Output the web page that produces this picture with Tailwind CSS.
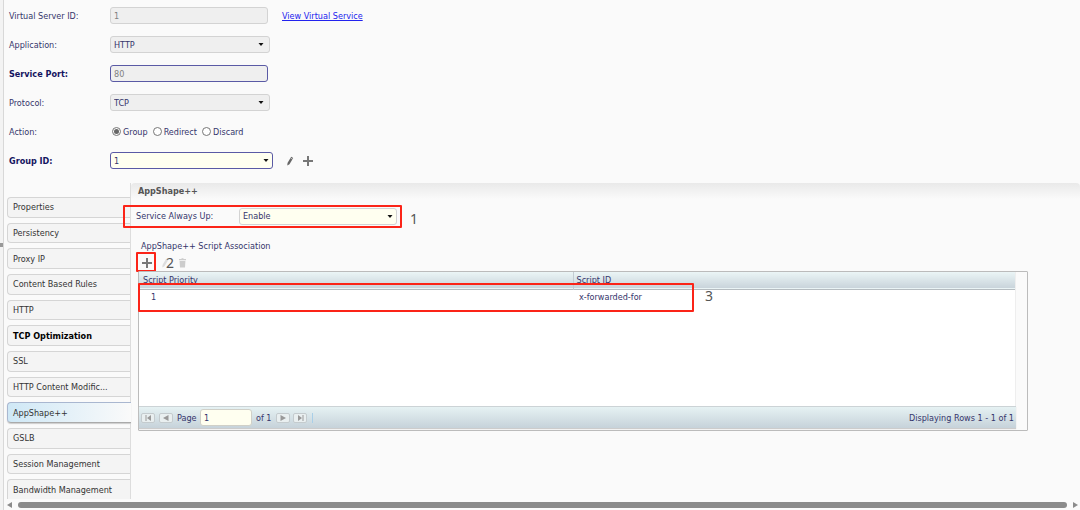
<!DOCTYPE html>
<html lang="en">
<head>
  <meta charset="UTF-8">
  <meta name="viewport" content="width=device-width, initial-scale=1.0">
  <title>Virtual Service</title>
  <script src="https://cdn.jsdelivr.net/npm/@tailwindcss/browser@4"></script>
</head>
<body class="h-screen flex overflow-hidden bg-[#fafafa] font-['DejaVu_Sans_Condensed','DejaVu_Sans',sans-serif] text-[9px] leading-3 text-[#35356b]">
  <!-- Splitter -->
  <div class="w-1 shrink-0 flex items-center bg-[#f3f3f3] border-r border-[#d8d8d8]">
    <span class="mb-5 w-[3px] h-1 bg-[#999]"></span>
  </div>

  <div class="flex-1 min-w-0 flex flex-col">
    <!-- Service form -->
    <form class="pt-px pl-[5px] shrink-0">
      <div class="h-[29px] flex items-center">
        <label for="vsid" class="w-[101px]">Virtual Server ID:</label>
        <input id="vsid" type="text" value="1" disabled class="w-[158px] h-[17px] px-[3px] rounded-[3px] border border-[#d3d3d3] bg-[#efefef] text-[#808080]">
        <a href="#" class="ml-[14px] text-[#2222ee] underline">View Virtual Service</a>
      </div>
      <div class="h-[29px] flex items-center">
        <label for="app" class="w-[101px]">Application:</label>
        <div class="relative w-40">
          <select id="app" class="block appearance-none w-full h-[17px] px-[3px] rounded-[3px] border border-[#d3d3d3] bg-[#efefef]"><option>HTTP</option></select>
          <svg class="absolute right-1.5 top-[7px] pointer-events-none" width="6" height="4" viewBox="0 0 6 4"><path d="M.5 0h5L3 3z" fill="#111"/></svg>
        </div>
      </div>
      <div class="h-[29px] flex items-center">
        <label for="port" class="w-[101px] font-bold text-[#14145f]">Service Port:</label>
        <input id="port" type="text" value="80" disabled class="w-[158px] h-[17px] px-[3px] rounded-[3px] border border-[#5a5aa5] bg-[#efefef] text-[#808080]">
      </div>
      <div class="h-[29px] flex items-center">
        <label for="proto" class="w-[101px]">Protocol:</label>
        <div class="relative w-40">
          <select id="proto" class="block appearance-none w-full h-[17px] px-[3px] rounded-[3px] border border-[#d3d3d3] bg-[#efefef]"><option>TCP</option></select>
          <svg class="absolute right-1.5 top-[7px] pointer-events-none" width="6" height="4" viewBox="0 0 6 4"><path d="M.5 0h5L3 3z" fill="#111"/></svg>
        </div>
      </div>
      <div class="h-[29px] flex items-center">
        <span class="w-[101px]">Action:</span>
        <div class="flex gap-[5px] pl-0.5">
          <label class="flex items-center gap-0.5"><input type="radio" name="action" checked class="appearance-none size-[9px] rounded-full border border-[#777] bg-[#666] bg-clip-content p-px">Group</label>
          <label class="flex items-center gap-0.5"><input type="radio" name="action" class="appearance-none size-[9px] rounded-full border border-[#777] bg-white">Redirect</label>
          <label class="flex items-center gap-0.5"><input type="radio" name="action" class="appearance-none size-[9px] rounded-full border border-[#777] bg-white">Discard</label>
        </div>
      </div>
      <div class="h-[29px] flex items-center">
        <label for="group" class="w-[101px] font-bold text-[#14145f]">Group ID:</label>
        <div class="relative w-[163px]">
          <select id="group" class="block appearance-none w-full h-[17px] px-[3px] rounded-[3px] border border-[#5a5aa5] bg-[#fffff0]"><option>1</option></select>
          <svg class="absolute right-1 top-[7px] pointer-events-none" width="6" height="4" viewBox="0 0 6 4"><path d="M.5 0h5L3 3z" fill="#111"/></svg>
        </div>
        <button type="button" aria-label="Edit group" class="ml-3"><svg width="10" height="10" viewBox="0 0 10 10"><path d="M6.2.8l2 1.2-3.7 6.3L2.3 9.6 2.5 7z" fill="#666"/><path d="M5.6 2l2 1.2" stroke="#fafafa" stroke-width=".6"/></svg></button>
        <button type="button" aria-label="Add group" class="ml-2"><svg width="10" height="10" viewBox="0 0 10 10"><path d="M5 0v10M0 5h10" stroke="#777" stroke-width="2"/></svg></button>
      </div>
    </form>

    <div class="flex-1 min-h-0 flex pt-2">
      <!-- Tabs -->
      <nav class="w-[127px] shrink-0 pt-[14px] pl-[3px] flex flex-col gap-[5px] text-[#333] border-r border-[#ddd]">
        <a href="#" class="flex-1 flex items-center pl-[5px] rounded-l-[4px] border border-r-0 border-[#d5d5d5] bg-[#f4f4f4]">Properties</a>
        <a href="#" class="flex-1 flex items-center pl-[5px] rounded-l-[4px] border border-r-0 border-[#d5d5d5] bg-[#f4f4f4]">Persistency</a>
        <a href="#" class="flex-1 flex items-center pl-[5px] rounded-l-[4px] border border-r-0 border-[#d5d5d5] bg-[#f4f4f4]">Proxy IP</a>
        <a href="#" class="flex-1 flex items-center pl-[5px] rounded-l-[4px] border border-r-0 border-[#d5d5d5] bg-[#f4f4f4]">Content Based Rules</a>
        <a href="#" class="flex-1 flex items-center pl-[5px] rounded-l-[4px] border border-r-0 border-[#d5d5d5] bg-[#f4f4f4]">HTTP</a>
        <a href="#" class="flex-1 flex items-center pl-[5px] rounded-l-[4px] border border-r-0 border-[#d5d5d5] bg-[#f4f4f4] font-bold text-black">TCP Optimization</a>
        <a href="#" class="flex-1 flex items-center pl-[5px] rounded-l-[4px] border border-r-0 border-[#d5d5d5] bg-[#f4f4f4]">SSL</a>
        <a href="#" class="flex-1 flex items-center pl-[5px] rounded-l-[4px] border border-r-0 border-[#d5d5d5] bg-[#f4f4f4]">HTTP Content Modific...</a>
        <a href="#" class="flex-1 flex items-center pl-[5px] -mr-px rounded-l-[4px] border border-r-0 border-[#a9b7d0] border-b-[#aaa] bg-linear-to-r from-[#cfe8f6] to-[#fafafa] shadow-[0_1px_1px_#ccc]">AppShape++</a>
        <a href="#" class="flex-1 flex items-center pl-[5px] rounded-l-[4px] border border-r-0 border-[#d5d5d5] bg-[#f4f4f4]">GSLB</a>
        <a href="#" class="flex-1 flex items-center pl-[5px] rounded-l-[4px] border border-r-0 border-[#d5d5d5] bg-[#f4f4f4]">Session Management</a>
        <a href="#" class="flex-1 flex items-center pl-[5px] rounded-tl-[4px] border border-r-0 border-b-0 border-[#d5d5d5] bg-[#f4f4f4]">Bandwidth Management</a>
      </nav>

      <!-- AppShape++ panel -->
      <section class="flex-1 min-w-0 pl-[7px]">
        <h2 class="-ml-[7px] pl-[7px] h-4 leading-4 font-bold text-[#555] rounded-t-[4px] bg-linear-to-b from-[#e9e9e9] to-[#fafafa]">AppShape++</h2>
        <div class="relative mt-[9px] -ml-0.5 h-4 flex items-center">
          <label for="always" class="w-[103px]">Service Always Up:</label>
          <div class="relative w-[158px]">
            <select id="always" class="block appearance-none w-full h-[17px] px-[3px] rounded-[3px] border border-[#d3d3d3] bg-[#fffff0]"><option>Enable</option></select>
            <svg class="absolute right-1 top-[7px] pointer-events-none" width="6" height="4" viewBox="0 0 6 4"><path d="M.5 0h5L3 3z" fill="#111"/></svg>
          </div>
          <span class="absolute -left-[13px] -top-[3px] w-[279px] h-[23px] border-2 border-[#fb2418] rounded-[1px] pointer-events-none"></span>
          <span class="absolute left-[274px] top-[3px] font-['Noto_Sans',sans-serif] text-[14px] leading-4 text-[#555]">1</span>
        </div>

        <h3 class="mt-4 h-3 pl-[3px]">AppShape++ Script Association</h3>
        <div class="relative h-[19px] flex items-center pl-1 pt-0.5">
          <button type="button" aria-label="Add script"><svg width="10" height="10" viewBox="0 0 10 10"><path d="M5 0v10M0 5h10" stroke="#777" stroke-width="2"/></svg></button>
          <button type="button" aria-label="Edit script" class="ml-2"><svg width="10" height="10" viewBox="0 0 10 10"><path d="M6.2.8l2 1.2-3.7 6.3L2.3 9.6 2.5 7z" fill="#ddd"/></svg></button>
          <button type="button" aria-label="Delete script" class="ml-2"><svg width="9" height="10" viewBox="0 0 9 10"><path d="M1 1h2.5V.2h2V1H8v1.2H1zM1.6 3h5.8L7 9.6H2z" fill="#ccc"/></svg></button>
          <span class="absolute -left-0.5 top-0 size-5 border-2 border-[#fb2418] rounded-[1px] pointer-events-none"></span>
          <span class="absolute left-7 top-[3px] font-['Noto_Sans',sans-serif] text-[14px] leading-4 text-[#555]">2</span>
        </div>

        <div class="relative mr-[52px] h-[160px] border border-[#bbb] rounded-[1px] pr-[11px] pb-0.5 flex flex-col">
          <div class="flex-1 bg-white border-r border-[#eee]">
            <table class="w-full table-fixed text-left">
              <thead>
                <tr class="h-[17px] bg-linear-to-b from-[#ebf5f6] to-[#c9d4db] border-b border-[#b5bcc0]">
                  <th class="w-[434px] pl-1 p-0 font-normal border-r border-[#c3ccd2]">Script Priority</th>
                  <th class="pl-[3px] p-0 font-normal">Script ID</th>
                </tr>
              </thead>
              <tbody>
                <tr class="h-4">
                  <td class="pl-3 p-0">1</td>
                  <td class="pl-1.5 p-0">x-forwarded-for</td>
                </tr>
              </tbody>
            </table>
          </div>
          <!-- Pager -->
          <div class="h-[22px] shrink-0 flex items-center px-[2px] border-t border-[#ccd3d6] bg-linear-to-b from-[#e6f2f3] to-[#c6d2da] shadow-[0_1px_1px_#ccc]">
            <button type="button" aria-label="First page" class="w-[14px] h-[10px] flex items-center justify-center rounded-[2px] border border-[#c4cbce] bg-[#e9eff0]"><svg width="7" height="6" viewBox="0 0 7 6"><path d="M.5 0h1v6h-1zM6 0v6L2 3z" fill="#999"/></svg></button>
            <button type="button" aria-label="Previous page" class="ml-1 w-[14px] h-[10px] flex items-center justify-center rounded-[2px] border border-[#c4cbce] bg-[#e9eff0]"><svg width="6" height="6" viewBox="0 0 6 6"><path d="M5.5 0v6L0 3z" fill="#999"/></svg></button>
            <label for="page" class="w-[23px] ml-1">Page</label>
            <input id="page" type="text" value="1" class="w-[52px] h-[17px] px-[3px] rounded-[3px] border border-[#d0d0c8] bg-[#fffff0]">
            <span class="ml-1 w-5 whitespace-nowrap">of 1</span>
            <button type="button" aria-label="Next page" class="w-[14px] h-[10px] flex items-center justify-center rounded-[2px] border border-[#c4cbce] bg-[#e9eff0]"><svg width="6" height="6" viewBox="0 0 6 6"><path d="M.5 0v6L6 3z" fill="#999"/></svg></button>
            <button type="button" aria-label="Last page" class="ml-[3px] w-[14px] h-[10px] flex items-center justify-center rounded-[2px] border border-[#c4cbce] bg-[#e9eff0]"><svg width="7" height="6" viewBox="0 0 7 6"><path d="M5.5 0h1v6h-1zM1 0v6l4-3z" fill="#999"/></svg></button>
            <span class="ml-[5px] w-px h-[10px] bg-[#a9cfe8]"></span>
            <span class="ml-auto">Displaying Rows 1 - 1 of 1</span>
          </div>
          <span class="absolute -left-px top-[11px] w-[556px] h-[29px] border-2 border-[#fb2418] rounded-[1px] pointer-events-none"></span>
          <span class="absolute left-[566px] top-4 font-['Noto_Sans',sans-serif] text-[14px] leading-4 text-[#555]">3</span>
        </div>
      </section>
    </div>

    <!-- Horizontal scrollbar -->
    <div class="h-[11px] shrink-0 flex items-center gap-1.5 pl-[3px] pr-0.5 bg-[#fafafa]">
      <svg width="5" height="6" viewBox="0 0 5 6"><path d="M5 0v6L0 3z" fill="#8b8b8b"/></svg>
      <div class="flex-1 h-1.5 rounded-full bg-[#8b8b8b]"></div>
      <svg width="5" height="6" viewBox="0 0 5 6"><path d="M0 0v6l5-3z" fill="#8b8b8b"/></svg>
    </div>
  </div>
</body>
</html>
